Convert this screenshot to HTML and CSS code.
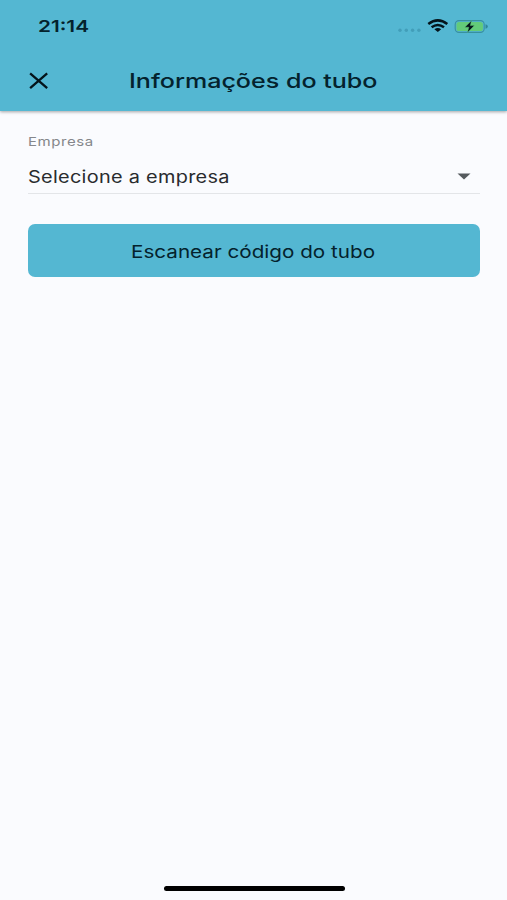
FILE: index.html
```html
<!DOCTYPE html>
<html lang="pt-BR">
<head>
<meta charset="utf-8">
<title>Informações do tubo</title>
<link rel="stylesheet" href="styles.css">
</head>
<body>
<div class="screen">
  <header class="header">
    <div class="status">
      <span class="time wide">21:14</span>
      <svg class="indicators" width="94" height="20" viewBox="0 0 94 20" aria-hidden="true">
        <g fill="#429eb9"><circle cx="4" cy="14.2" r="1.7"/><circle cx="10.3" cy="14.2" r="1.7"/><circle cx="16.6" cy="14.2" r="1.7"/><circle cx="22.9" cy="14.2" r="1.7"/></g>
        <g fill="none" stroke="#04141b" stroke-width="2.5"><path d="M32.3 8.1Q41.8 .7 51.3 8.1"/><path d="M35.6 11.3Q41.8 6.7 48 11.3"/></g>
        <path d="M38.4 13.3Q41.8 10.9 45.2 13.3L41.8 16.1Z" fill="#04141b"/>
        <rect x="59.2" y="4.6" width="29" height="11.8" rx="3.8" fill="none" stroke="#38909f" stroke-width="1.1"/>
        <rect x="60.5" y="5.9" width="26.4" height="9.2" rx="2.6" fill="#63cb79"/>
        <path d="M89.5 8.2q2.3.6 2.3 2.3t-2.3 2.3Z" fill="#2f8799"/>
        <path d="M75.5 4.8 68.8 11.2H72.8l-1.3 5.3 6.9-6.9h-4.1Z" fill="#04141b" stroke="#63cb79" stroke-width=".4"/>
      </svg>
    </div>
    <div class="toolbar">
      <svg class="close" width="20" height="18" viewBox="0 0 20 18" role="button" aria-label="Fechar"><path d="M2 2.2 17.3 15.4M17.3 2.2 2 15.4" stroke="#04141b" stroke-width="2.3" stroke-linecap="square" fill="none"/></svg>
      <h1 class="title wide">Informações do tubo</h1>
    </div>
  </header>
  <main class="form">
    <div class="field">
      <div class="label"><span class="label-text wide">Empresa</span></div>
      <div class="select">
        <span class="value wide">Selecione a empresa</span>
        <svg width="14" height="7" viewBox="0 0 14 7" aria-hidden="true"><path d="M.5.5h13L7 6.5Z" fill="#555a5e"/></svg>
      </div>
    </div>
    <button class="scan"><span class="scan-text wide">Escanear código do tubo</span></button>
  </main>
  <div class="home"></div>
</div>
</body>
</html>
```

FILE: styles.css
```css
* { box-sizing: border-box; }
body { margin: 0; background: #fafbfe; font-family: Inter, "Liberation Sans", sans-serif; color: #04222d; }
.screen { height: 900px; display: flex; flex-direction: column; overflow: hidden; }
.wide { display: inline-block; white-space: nowrap; transform-origin: left center; transform: scaleX(1.2); }
.header { height: 111px; background: #54b7d2; box-shadow: 0 1px 3px rgba(0, 0, 0, .35); }
.status { height: 52px; padding: 0 17px 0 38px; display: flex; align-items: center; justify-content: space-between; }
.time { font-size: 16.5px; font-weight: 600; line-height: 20px; transform: scaleX(1.26); }
.toolbar { height: 58px; padding-left: 29px; display: flex; align-items: center; }
.title { margin: 0 0 0 80px; font-size: 20.3px; line-height: 26px; font-weight: 500; transform: scaleX(1.236); }
.form { flex: 1; padding: 21px 27px 0 28px; }
.field { height: 62px; border-bottom: 1px solid #e3e5e8; }
.label { height: 20px; font-size: 12.3px; line-height: 20px; color: #85878b; }
.label-text { letter-spacing: .45px; transform: scaleX(1.22); }
.select { height: 28px; margin-top: 10px; padding-right: 9px; display: flex; align-items: center; justify-content: space-between; }
.value { margin: 1px 0 0 -.5px; line-height: 22px; font-size: 17px; letter-spacing: .25px; color: #292b2e; transform: scaleX(1.17); }
.scan { display: flex; align-items: center; width: 452px; height: 53px; margin-top: 30px; padding: 2px 0 0 103px; border: 0; border-radius: 7px; background: #54b7d2; font: 400 17.5px Inter, "Liberation Sans", sans-serif; color: #04222d; }
.scan-text { transform: scaleX(1.18); }
.home { width: 181px; height: 5.5px; margin: 0 auto 9px 164px; border-radius: 3px; background: #000; }
```
